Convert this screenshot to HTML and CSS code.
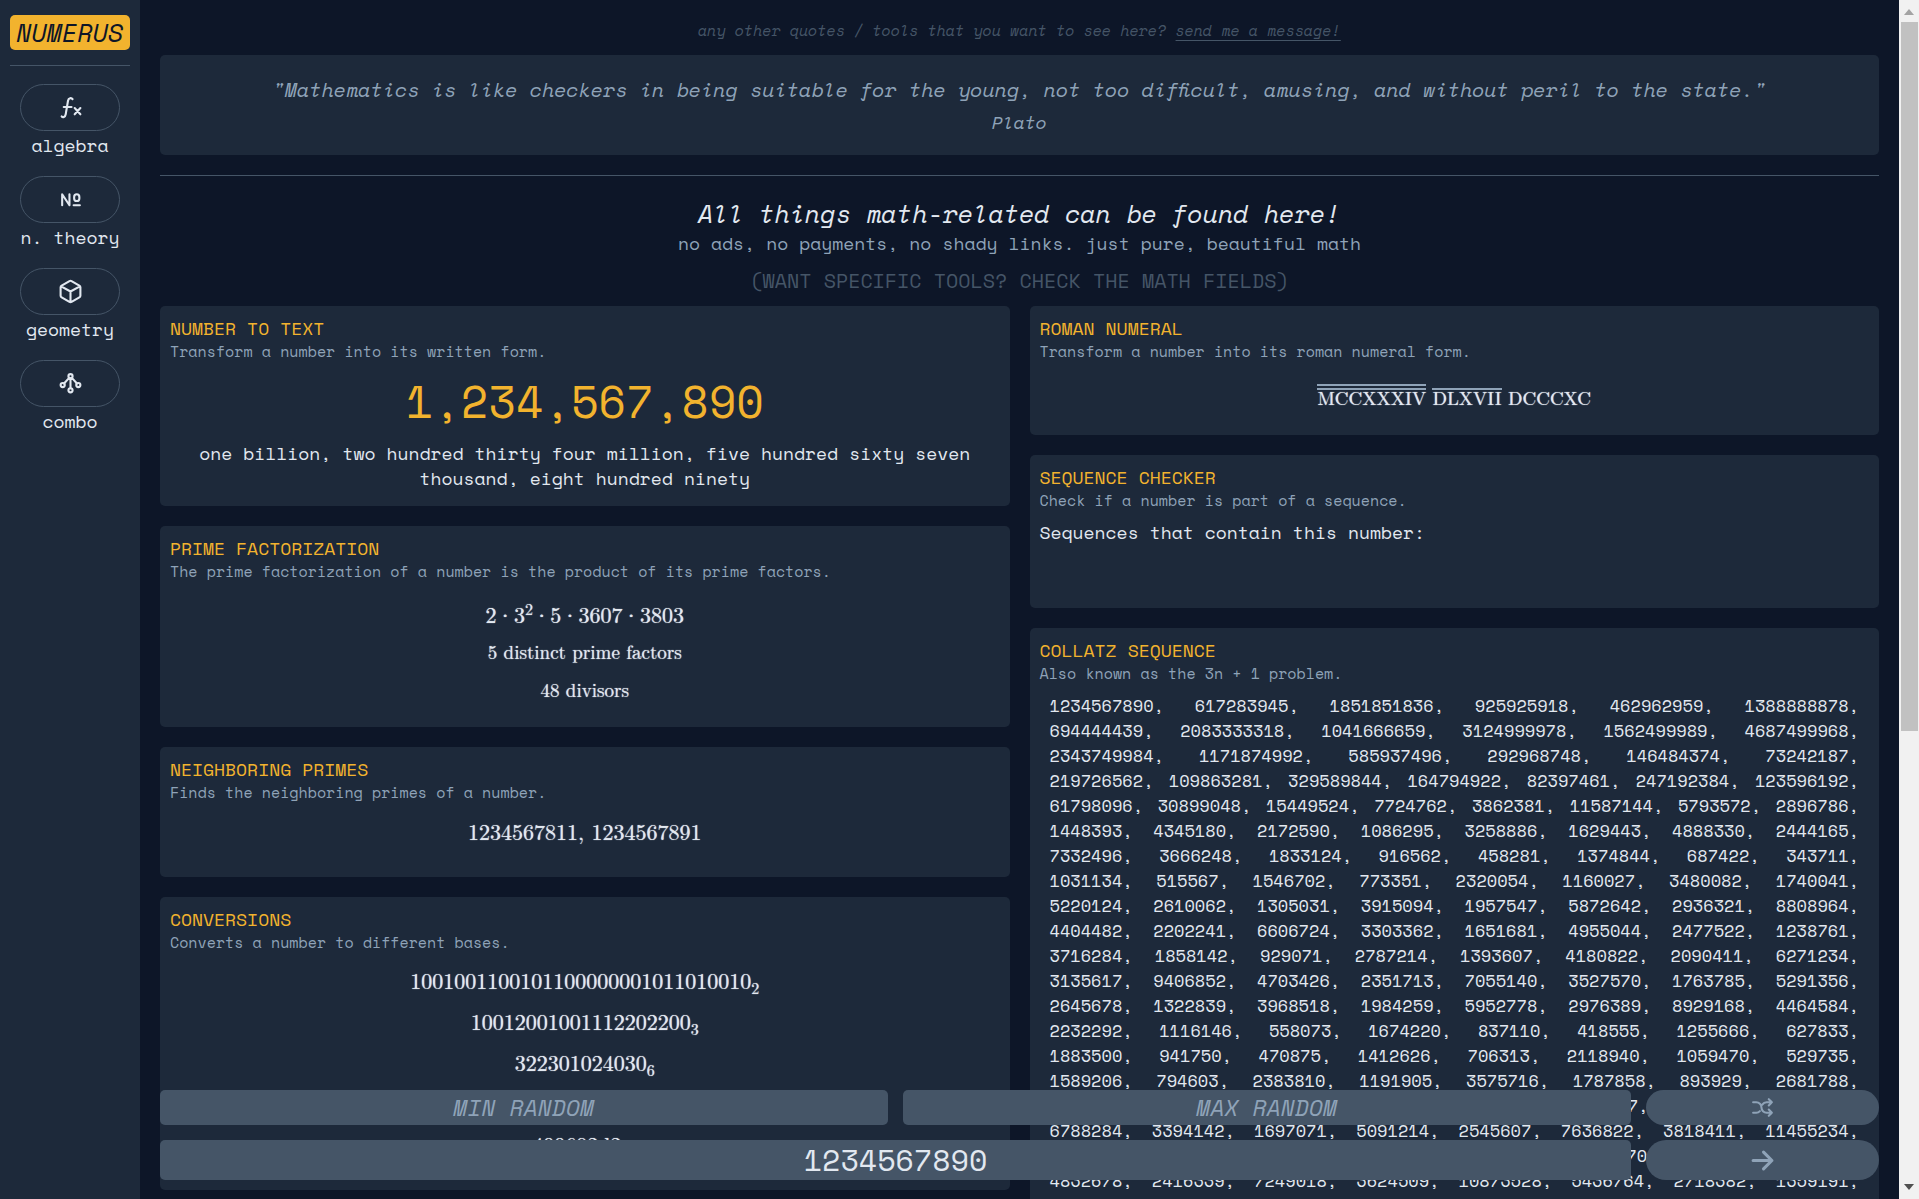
FILE: index.html
```html
<!DOCTYPE html>
<html lang="en">
<head>
<meta charset="utf-8">
<meta name="viewport" content="width=device-width, initial-scale=1">
<title>Numerus</title>
<link rel="stylesheet" href="styles.css">
</head>
<body>
<div class="shell">
  <nav class="sidebar" aria-label="Math fields">
    <a class="brand" href="#">NUMERUS</a>
    <hr class="rule">
    <ul class="fields">
      <li><a class="field" href="#algebra">
        <span class="pill"><svg class="icon" viewBox="0 0 24 24"><path d="M3.500 20.500c1 1.300 3.400 1 3.900-2l2.200-13c.5-3 3.400-3 4.400-1.500M5.500 11.500h7.500M16 12.500l5.500 6M16 18.500l5.500-6"/></svg></span>
        <span>algebra</span></a></li>
      <li><a class="field" href="#theory">
        <span class="pill"><svg class="icon" viewBox="0 0 24 24"><path d="M4 17.500V7l7 10.500V7M15 17.500h6M18 7a2.500 2.500 0 0 1 2.500 2.500v1.500a2.500 2.500 0 0 1-5 0V9.500A2.500 2.500 0 0 1 18 7z"/></svg></span>
        <span>n. theory</span></a></li>
      <li><a class="field" href="#geometry">
        <span class="pill"><svg class="icon" viewBox="0 0 24 24"><path d="M21.500 16V8a2 2 0 0 0-1-1.700l-7.500-4.300a2 2 0 0 0-2 0L3.500 6.300A2 2 0 0 0 2.500 8v8a2 2 0 0 0 1 1.700l7.500 4.300a2 2 0 0 0 2 0l7.500-4.300a2 2 0 0 0 1-1.700zM3 7l9 5 9-5M12 22V12"/></svg></span>
        <span>geometry</span></a></li>
      <li><a class="field" href="#combo">
        <span class="pill"><svg class="icon" viewBox="0 0 24 24"><circle cx="12" cy="5" r="2"/><circle cx="4.500" cy="13.500" r="2"/><circle cx="19.500" cy="13.500" r="2"/><circle cx="12" cy="18.500" r="2"/><path d="M12 7v9.500M10.700 6.600L5.800 12M13.300 6.600l4.900 5.400"/></svg></span>
        <span>combo</span></a></li>
    </ul>
  </nav>

  <main class="main">
    <div class="scroll">
      <p class="tip">any other quotes / tools that you want to see here? <a href="#message">send me a message!</a></p>
      <blockquote class="quote">
        <p>"Mathematics is like checkers in being suitable for the young, not too difficult, amusing, and without peril to the state."</p>
        <cite>Plato</cite>
      </blockquote>
      <hr class="rule">
      <header class="intro">
        <h1>All things math-related can be found here!</h1>
        <p class="sub">no ads, no payments, no shady links. just pure, beautiful math</p>
        <p class="hint">(WANT SPECIFIC TOOLS? CHECK THE MATH FIELDS)</p>
      </header>
      <div class="columns">
        <div class="column">
          <section class="card">
            <h2>NUMBER TO TEXT</h2>
            <p class="desc">Transform a number into its written form.</p>
            <p class="big">1,234,567,890</p>
            <p class="words">one billion, two hundred thirty four million, five hundred sixty seven thousand, eight hundred ninety</p>
          </section>
          <section class="card">
            <h2>PRIME FACTORIZATION</h2>
            <p class="desc">The prime factorization of a number is the product of its prime factors.</p>
            <div class="math factors">
              <p>2<span class="dot">·</span>3<sup>2</sup><span class="dot">·</span>5<span class="dot">·</span>3607<span class="dot">·</span>3803</p>
              <p class="note">5 distinct prime factors</p>
              <p class="note">48 divisors</p>
            </div>
          </section>
          <section class="card">
            <h2>NEIGHBORING PRIMES</h2>
            <p class="desc">Finds the neighboring primes of a number.</p>
            <div class="math neighbors"><p>1234567811, 1234567891</p></div>
          </section>
          <section class="card">
            <h2>CONVERSIONS</h2>
            <p class="desc">Converts a number to different bases.</p>
            <div class="math bases">
              <p>1001001100101100000001011010010<sub>2</sub></p>
              <p>10012001001112202200<sub>3</sub></p>
              <p>322301024030<sub>6</sub></p>
              <p>2a5555016<sub>12</sub></p>
              <p>499602d2<sub>16</sub></p>
            </div>
          </section>
        </div>
        <div class="column">
          <section class="card">
            <h2>ROMAN NUMERAL</h2>
            <p class="desc">Transform a number into its roman numeral form.</p>
            <div class="math roman"><p><span class="million">MCCXXXIV</span> <span class="thousand">DLXVII</span> DCCCXC</p></div>
          </section>
          <section class="card sequences">
            <h2>SEQUENCE CHECKER</h2>
            <p class="desc">Check if a number is part of a sequence.</p>
            <p class="lead">Sequences that contain this number:</p>
          </section>
          <section class="card">
            <h2>COLLATZ SEQUENCE</h2>
            <p class="desc">Also known as the 3n + 1 problem.</p>
            <p class="collatz">
              1234567890, 617283945, 1851851836, 925925918, 462962959, 1388888878,<br>
              694444439, 2083333318, 1041666659, 3124999978, 1562499989, 4687499968,<br>
              2343749984, 1171874992, 585937496, 292968748, 146484374, 73242187,<br>
              219726562, 109863281, 329589844, 164794922, 82397461, 247192384, 123596192,<br>
              61798096, 30899048, 15449524, 7724762, 3862381, 11587144, 5793572, 2896786,<br>
              1448393, 4345180, 2172590, 1086295, 3258886, 1629443, 4888330, 2444165,<br>
              7332496, 3666248, 1833124, 916562, 458281, 1374844, 687422, 343711,<br>
              1031134, 515567, 1546702, 773351, 2320054, 1160027, 3480082, 1740041,<br>
              5220124, 2610062, 1305031, 3915094, 1957547, 5872642, 2936321, 8808964,<br>
              4404482, 2202241, 6606724, 3303362, 1651681, 4955044, 2477522, 1238761,<br>
              3716284, 1858142, 929071, 2787214, 1393607, 4180822, 2090411, 6271234,<br>
              3135617, 9406852, 4703426, 2351713, 7055140, 3527570, 1763785, 5291356,<br>
              2645678, 1322839, 3968518, 1984259, 5952778, 2976389, 8929168, 4464584,<br>
              2232292, 1116146, 558073, 1674220, 837110, 418555, 1255666, 627833,<br>
              1883500, 941750, 470875, 1412626, 706313, 2118940, 1059470, 529735,<br>
              1589206, 794603, 2383810, 1191905, 3575716, 1787858, 893929, 2681788,<br>
              1340894, 670447, 2011342, 1005671, 3017014, 1508507, 4525522, 2262761,<br>
              6788284, 3394142, 1697071, 5091214, 2545607, 7636822, 3818411, 11455234,<br>
              5727617, 17182852, 8591426, 4295713, 12887140, 6443570, 3221785, 9665356,<br>
              4832678, 2416339, 7249018, 3624509, 10873528, 5436764, 2718382, 1359191,
            </p>
          </section>
        </div>
      </div>
    </div>
    <form class="dock">
      <div class="row">
        <input class="box small" type="text" aria-label="Min random" placeholder="MIN RANDOM">
        <input class="box small" type="text" aria-label="Max random" placeholder="MAX RANDOM">
        <button class="action" type="button" aria-label="Random number"><svg class="icon" viewBox="0 0 24 24"><path d="M18 4l3 3-3 3M18 20l3-3-3-3M3 7h3a5 5 0 0 1 5 5 5 5 0 0 0 5 5h5M21 7h-5a5 5 0 0 0-4.200 2.200M3 17h3a5 5 0 0 0 3.500-1.500"/></svg></button>
      </div>
      <div class="row">
        <input class="box large" type="text" aria-label="Number" value="1234567890">
        <button class="action" type="submit" aria-label="Calculate"><svg class="icon arrow" viewBox="0 0 24 24"><path d="M3 12h18M13 4l8 8-8 8"/></svg></button>
      </div>
    </form>
  </main>

  <div class="track" aria-hidden="true">
    <svg class="tick up" viewBox="0 0 10 6"><path d="M0 6l5-6 5 6z"/></svg>
    <div class="thumb"></div>
    <svg class="tick down" viewBox="0 0 10 6"><path d="M0 0l5 6 5-6z"/></svg>
  </div>
</div>
</body>
</html>
```
FILE: styles.css
```css
:root {
  --bg: #0d1628;
  --panel: #1d293a;
  --line: #455567;
  --muted: #8fa3b8;
  --text: #e2e8f0;
  --amber: #f2b32e;
}

* { box-sizing: border-box; margin: 0; padding: 0; }

body {
  background: var(--bg);
  color: var(--text);
  font-family: "Space Mono", "Liberation Mono", monospace;
  font-size: 18px;
  line-height: 25px;
}

a { color: inherit; text-decoration: none; }
ul { list-style: none; }

.shell {
  display: grid;
  grid-template-columns: 140px minmax(0, 1fr) 20px;
  height: 100vh;
  overflow: hidden;
}

.rule { border: 0; border-top: 1px solid var(--line); }

.icon {
  width: 25px;
  height: 25px;
  fill: none;
  stroke: currentColor;
  stroke-width: 2;
  stroke-linecap: round;
  stroke-linejoin: round;
}

.arrow { stroke-width: 3; }

/* Sidebar */
.sidebar {
  display: flex;
  flex-direction: column;
  gap: 15px;
  padding: 15px 10px;
  background: var(--panel);
}

.brand {
  padding: 5px 0;
  border-radius: 5px;
  background: var(--amber);
  color: var(--bg);
  font-size: 25px;
  font-style: italic;
  text-align: center;
}

.fields {
  display: flex;
  flex-direction: column;
  gap: 18px;
  padding-top: 3px;
}

.field {
  display: flex;
  flex-direction: column;
  align-items: center;
  gap: 2px;
}

.pill {
  display: grid;
  place-items: center;
  width: 100px;
  height: 47px;
  border: 1px solid var(--line);
  border-radius: 24px;
}

/* Page */
.main { position: relative; min-height: 0; }

.scroll {
  height: 100%;
  padding: 20px;
  overflow-y: auto;
  scrollbar-width: none;
}

.tip {
  margin-bottom: 15px;
  color: var(--line);
  font-size: 15px;
  font-style: italic;
  line-height: 20px;
  text-align: center;
}

.tip a { text-decoration: underline 1px; text-underline-offset: 4px; }

.quote {
  display: flex;
  flex-direction: column;
  gap: 5px;
  margin-bottom: 20px;
  padding: 20px;
  border-radius: 5px;
  background: var(--panel);
  color: var(--muted);
  font-style: italic;
  text-align: center;
}

.quote p { font-size: 20px; line-height: 30px; }

.intro { padding: 20px 0 10px; text-align: center; }
.intro h1 { font-size: 25px; font-style: italic; font-weight: 400; line-height: 35px; }
.intro .sub { color: var(--muted); }
.intro .hint { margin-top: 10px; color: var(--line); font-size: 20px; line-height: 30px; }

.columns {
  display: grid;
  grid-template-columns: repeat(2, minmax(0, 1fr));
  align-items: start;
  gap: 20px;
}

.column { display: flex; flex-direction: column; gap: 20px; }

.card {
  padding: 10px;
  border-radius: 5px;
  background: var(--panel);
}

.card h2 { color: var(--amber); font-size: 18px; font-weight: 400; line-height: 25px; }
.desc { margin-bottom: 1px; color: var(--muted); font-size: 15px; line-height: 20px; }

.big {
  margin-top: 15px;
  color: var(--amber);
  font-size: 45px;
  line-height: 50px;
  text-align: center;
}

.words { padding: 15px 25px 5px; text-align: center; }

.math {
  display: flex;
  flex-direction: column;
  font-family: "KaTeX_Main", "Latin Modern Roman", "CMU Serif", "Old Standard TT", "Liberation Serif", serif;
  font-size: 22px;
  text-align: center;
  text-shadow: 0 0 1px currentColor;
}

.math sup, .math sub { font-size: 16px; line-height: 0; }

.dot { margin: 0 5px; font-family: "Liberation Serif", serif; line-height: 0; }

.factors { gap: 13px; padding: 19px 0 15px; }
.factors .note { font-size: 19px; }
.neighbors { padding: 15px 0 24px; }
.bases { gap: 16px; padding: 14px 0 24px; }
.roman { padding: 22px 0 15px; font-size: 19px; }

.million, .thousand {
  display: inline-block;
  line-height: 16px;
  border-top: 2px solid var(--muted);
}

.million { border-top: 6px double var(--muted); }

.sequences { min-height: 153px; }
.lead { margin-top: 10px; }

.collatz {
  padding: 9px 10px 10px;
  font-size: 17px;
  text-align: justify;
  text-align-last: justify;
}

/* Number entry, floating over the page */
.dock {
  position: absolute;
  right: 20px;
  bottom: 19px;
  left: 20px;
  display: flex;
  flex-direction: column;
  gap: 15px;
}

.row { display: flex; gap: 15px; }

.box {
  flex: 1;
  min-width: 0;
  padding-bottom: 2px;
  border: 0;
  border-radius: 5px;
  outline: 0;
  background: var(--line);
  color: var(--text);
  font-family: inherit;
  text-align: center;
}

.small { height: 35px; font-size: 23px; font-style: italic; }
.small::placeholder { color: var(--muted); }
.large { height: 40px; font-size: 30px; }

.action {
  display: grid;
  place-items: center;
  flex: 0 0 233px;
  border: 0;
  border-radius: 20px;
  background: var(--line);
  color: var(--muted);
}

/* Scroll track */
.track {
  display: flex;
  flex-direction: column;
  align-items: center;
  gap: 7px;
  padding: 9px 1px;
  background: #f1f1f1;
}

.thumb { flex: 0 0 60%; width: 17px; background: #c1c1c1; }
.tick { width: 10px; height: 6px; fill: #505050; }
.tick.up { fill: #a3a3a3; }
.tick.down { margin-top: auto; }
```
